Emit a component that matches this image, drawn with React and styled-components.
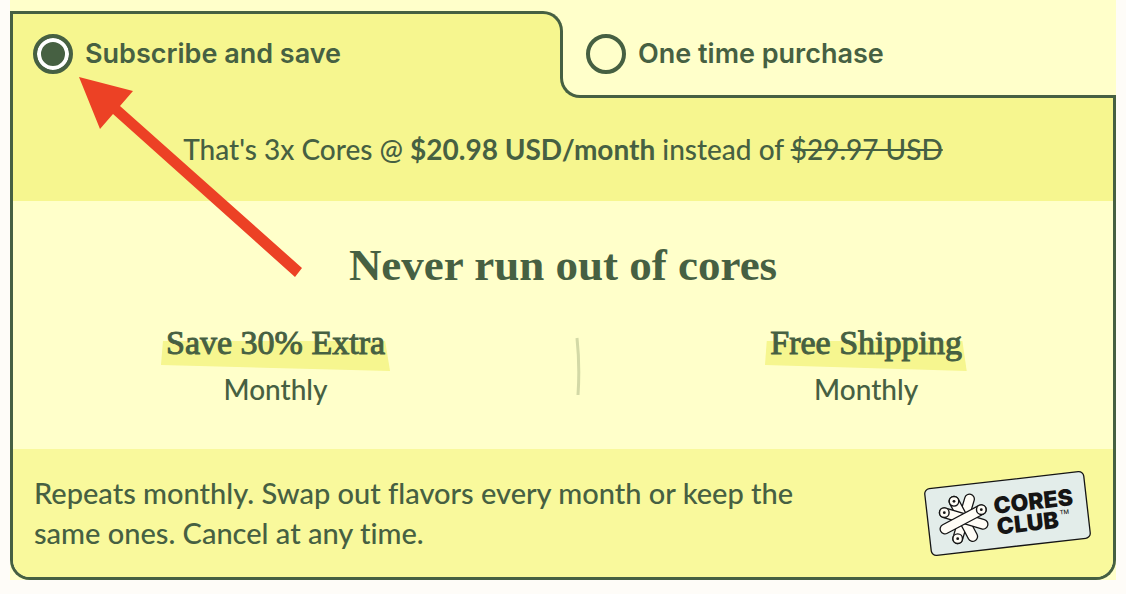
import React from "react";
import styled, { createGlobalStyle } from "styled-components";

const ink = "#466042";
const pale = "#ffffca";
const lemon = "#f6f68f";
const lemonSoft = "#f9f99c";
const sans = '"Lato", "Inter", sans-serif';
const labelSans = '"Inter", sans-serif';
const serif = '"Liberation Serif", "Times New Roman", serif';

const GlobalStyle = createGlobalStyle`
  *, *::before, *::after { box-sizing: border-box; }
  body {
    margin: 0;
    background: #fefcf8;
    color: ${ink};
    font-family: ${sans};
    font-weight: 500;
    font-variant-ligatures: none;
  }
`;

const Page = styled.main`
  position: relative;
  padding: 0 10px 14px;
`;

const Offer = styled.form`
  background: ${pale};
  padding-top: 11px;
`;

const Tabs = styled.fieldset`
  display: grid;
  grid-template-columns: 1fr 1fr;
  margin: 0;
  padding: 0;
  border: 0;
`;

const Tab = styled.label`
  position: relative;
  z-index: 0;
  display: flex;
  align-items: center;
  gap: 12px;
  min-width: 0;
  padding: 23px 23px 24px;
  font-family: ${labelSans};
  font-size: 27px;
  line-height: 40px;
  font-weight: 600;
  white-space: nowrap;
  cursor: pointer;
  background: linear-gradient(${pale} 50px, ${lemon} 50px);

  &::before {
    content: "";
    position: absolute;
    z-index: -1;
  }
`;

const ActiveTab = styled(Tab)`
  &::before {
    inset: 0 0 36px 0;
    background: ${lemon};
    border: 3px solid ${ink};
    border-bottom: 0;
    border-radius: 0 20px 0 0;
  }

  &::after {
    content: "";
    position: absolute;
    inset: 40px auto 0 0;
    border-left: 3px solid ${ink};
  }
`;

const IdleTab = styled(Tab)`
  &::before {
    inset: 40px 0 0 -3px;
    background: ${pale};
    border: solid ${ink};
    border-width: 0 0 3px 3px;
    border-radius: 0 0 0 20px;
  }
`;

const Radio = styled.input`
  appearance: none;
  flex: none;
  width: 40px;
  height: 40px;
  margin: 0;
  border: 4px solid ${ink};
  border-radius: 50%;

  &:checked {
    background: ${ink};
    box-shadow: inset 0 0 0 4px #fff;
  }
`;

const Panel = styled.div`
  border: 3px solid ${ink};
  border-top: 0;
  border-radius: 0 0 20px 20px;
  overflow: hidden;
`;

const Price = styled.p`
  margin: 0;
  padding: 31px 20px 32px;
  background: ${lemon};
  text-align: center;
  font-size: 28px;
  line-height: 40px;
`;

const Perks = styled.section`
  padding: 36px 0 40px;
`;

const Heading = styled.h2`
  margin: 0 0 30px;
  text-align: center;
  font-family: ${serif};
  font-size: 45px;
  line-height: 56px;
  font-weight: 700;
`;

const PerkRow = styled.div`
  display: flex;
  justify-content: space-between;
  align-items: center;
  padding: 0 146px 0 148px;
`;

const Perk = styled.div`
  text-align: center;
  font-size: 28px;
  line-height: 40px;
`;

const PerkTitle = styled.h3`
  position: relative;
  z-index: 0;
  margin: 0 0 6px;
  padding: 0 5px;
  font-family: ${serif};
  font-size: 34px;
  line-height: 40px;
  font-weight: 400;
  -webkit-text-stroke: 1px ${ink};
`;

const Highlight = styled.svg`
  position: absolute;
  z-index: -1;
  left: 0;
  top: 18px;
  width: 100%;
  height: 30px;
`;

const Footer = styled.footer`
  display: flex;
  justify-content: space-between;
  align-items: center;
  gap: 24px;
  padding: 17px 20px 17px 21px;
  background: ${lemonSoft};
`;

const Note = styled.p`
  margin: 0;
  max-width: 780px;
  font-size: 29px;
  line-height: 40px;
`;

const BadgeText = styled.text`
  font-family: "Inter", sans-serif;
  font-size: 23px;
  font-weight: 900;
  fill: #151515;
`;

const BadgeMark = styled(BadgeText)`
  font-size: 6px;
  font-weight: 500;
`;

const Arrow = styled.svg`
  position: absolute;
  left: 70px;
  top: 70px;
  z-index: 2;
  pointer-events: none;
`;

function PerkItem({ title, text }) {
  return (
    <Perk>
      <PerkTitle>
        <Highlight viewBox="0 0 232 30" preserveAspectRatio="none" aria-hidden="true">
          <path d="M2 0H227L232 30L0 24Z" fill={lemon} />
        </Highlight>
        {title}
      </PerkTitle>
      {text}
    </Perk>
  );
}

// Each roll runs from its open end (x1, y1), which shows the hole, to its closed end.
const rolls = [
  { points: [46.5, 33, 34.7, 72.7], holeAtEnd: true },
  { points: [31, 35.3, 49.7, 70.5] },
  { points: [21.3, 46.7, 60, 58.2] },
  { points: [58.3, 43.7, 22, 63] },
];

function Roll({ points: [x1, y1, x2, y2], holeAtEnd }) {
  const line = { x1, y1, x2, y2, strokeLinecap: "round" };
  const cx = holeAtEnd ? x2 : x1;
  const cy = holeAtEnd ? y2 : y1;
  return (
    <g>
      <line {...line} stroke="#151515" strokeWidth="11" />
      <line {...line} stroke="#fffdf6" strokeWidth="8.4" />
      <circle cx={cx} cy={cy} r="4.8" fill="#fffdf6" stroke="#151515" strokeWidth="1.4" />
      <circle cx={cx} cy={cy} r="1.4" fill="#151515" />
    </g>
  );
}

function ClubBadge() {
  return (
    <svg width="170" height="94" viewBox="0 0 170 94" role="img" aria-label="Cores Club">
      <g transform="translate(84.5 47.5) rotate(-6.5)">
        <rect x="-80" y="-33.5" width="160" height="67" rx="5" fill="#e3edea" stroke="#151515" strokeWidth="1.3" />
        <BadgeText x="-13" y="-1">CORES</BadgeText>
        <BadgeText x="-12" y="20">CLUB</BadgeText>
        <BadgeMark x="52" y="7">TM</BadgeMark>
      </g>
      {rolls.map((roll) => (
        <Roll key={roll.points.join()} {...roll} />
      ))}
    </svg>
  );
}

export default function App() {
  return (
    <Page>
      <GlobalStyle />
      <Offer>
        <Tabs aria-label="Purchase type">
          <ActiveTab>
            <Radio type="radio" name="plan" defaultChecked />
            Subscribe and save
          </ActiveTab>
          <IdleTab>
            <Radio type="radio" name="plan" />
            One time purchase
          </IdleTab>
        </Tabs>
        <Panel>
          <Price>
            That's 3x Cores @ <strong>$20.98 USD/month</strong> instead of <s>$29.97 USD</s>
          </Price>
          <Perks>
            <Heading>Never run out of cores</Heading>
            <PerkRow>
              <PerkItem title="Save 30% Extra" text="Monthly" />
              <svg width="6" height="60" viewBox="0 0 6 60" aria-hidden="true">
                <path d="M2 2Q5 30 3 59" fill="none" stroke="#d3d9a6" strokeWidth="3" />
              </svg>
              <PerkItem title="Free Shipping" text="Monthly" />
            </PerkRow>
          </Perks>
          <Footer>
            <Note>Repeats monthly. Swap out flavors every month or keep the same ones. Cancel at any time.</Note>
            <ClubBadge />
          </Footer>
        </Panel>
      </Offer>
      <Arrow width="240" height="210" viewBox="70 70 240 210" aria-hidden="true">
        <path d="M79 77L133 91L120 106L302 268L295 277L113 114L100 129Z" fill="#ec4125" />
      </Arrow>
    </Page>
  );
}
